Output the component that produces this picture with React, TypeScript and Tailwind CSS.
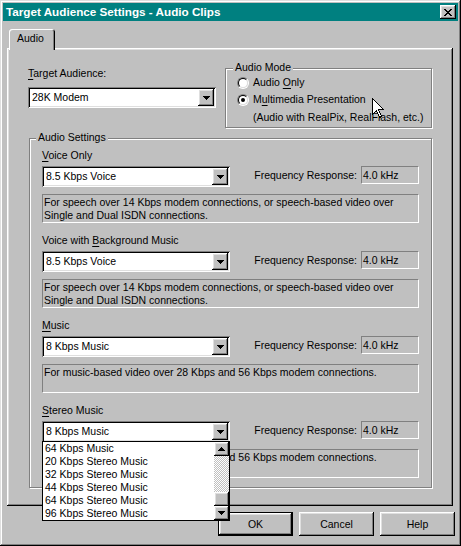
import React from 'react';

const raised =
  'shadow-[inset_-1px_-1px_#000,inset_1px_1px_#fff,inset_-2px_-2px_#808080,inset_2px_2px_#dfdfdf]';
const sunken =
  'shadow-[inset_1px_1px_#808080,inset_-1px_-1px_#fff,inset_2px_2px_#000,inset_-2px_-2px_#dfdfdf]';
const etched = 'border border-[#808080] shadow-[inset_1px_1px_#fff,1px_1px_#fff]';
const staticEdge = 'border border-[#808080] border-r-white border-b-white';

const speech = [
  'For speech over 14 Kbps modem connections, or speech-based video over',
  'Single and Dual ISDN connections.',
];
const music = ['For music-based video over 28 Kbps and 56 Kbps modem connections.'];

const listItems = [
  '64 Kbps Music',
  '20 Kbps Stereo Music',
  '32 Kbps Stereo Music',
  '44 Kbps Stereo Music',
  '64 Kbps Stereo Music',
  '96 Kbps Stereo Music',
];

function U({ children }: { children: React.ReactNode }) {
  return <span className="underline underline-offset-[2px] decoration-1">{children}</span>;
}

function Arrow({ up = false }: { up?: boolean }) {
  return (
    <svg width="7" height="4" viewBox="0 0 7 4" shapeRendering="crispEdges" className={up ? 'rotate-180' : ''}>
      <rect x="0" y="0" width="7" height="1" />
      <rect x="1" y="1" width="5" height="1" />
      <rect x="2" y="2" width="3" height="1" />
      <rect x="3" y="3" width="1" height="1" />
    </svg>
  );
}

function CloseGlyph() {
  const r: [number, number, number][] = [
    [0, 0, 2], [6, 0, 2], [1, 1, 2], [5, 1, 2], [2, 2, 4], [3, 3, 2],
    [2, 4, 4], [1, 5, 2], [5, 5, 2], [0, 6, 2], [6, 6, 2],
  ];
  return (
    <svg width="8" height="7" viewBox="0 0 8 7" shapeRendering="crispEdges">
      {r.map(([x, y, w], i) => (
        <rect key={i} x={x} y={y} width={w} height="1" />
      ))}
    </svg>
  );
}

function Select({ value, children }: { value: string; children?: React.ReactNode }) {
  return (
    <div className={`relative flex h-[21px] w-[188px] items-center bg-white p-[2px] ${sunken}`}>
      <span className="flex-1 pl-[2px] whitespace-nowrap">{value}</span>
      <div className={`flex h-[17px] w-[16px] items-center justify-center bg-[#c0c0c0] ${raised}`}>
        <Arrow />
      </div>
      {children}
    </div>
  );
}

function Radio({ checked = false }: { checked?: boolean }) {
  return (
    <div className="h-[12px] w-[12px] rounded-full border border-[#808080] border-r-white border-b-white">
      <div className="flex h-full w-full items-center justify-center rounded-full border border-black border-r-[#dfdfdf] border-b-[#dfdfdf] bg-white">
        {checked && <div className="h-[4px] w-[4px] rounded-full bg-black" />}
      </div>
    </div>
  );
}

function Button({ label, def = false }: { label: string; def?: boolean }) {
  return (
    <div
      className={`flex h-[24px] w-[75px] items-center justify-center bg-[#c0c0c0] ${raised} ${
        def ? 'border border-black' : ''
      }`}
    >
      {label}
    </div>
  );
}

// open list of the Stereo Music combo box
function DropList() {
  return (
    <div className="absolute left-0 top-[20px] z-20 flex h-[80px] w-[188px] border border-black bg-white">
      <div className="flex-1">
        {listItems.map((t) => (
          <div key={t} className="h-[13px] pl-[2px] whitespace-nowrap">
            {t}
          </div>
        ))}
      </div>
      <div className="flex w-[15px] flex-col">
        <div className={`flex h-[14px] items-center justify-center bg-[#c0c0c0] ${raised}`}>
          <Arrow up />
        </div>
        <div className="flex-1 bg-[repeating-conic-gradient(#c0c0c0_0%_25%,#fff_0%_50%)] bg-size-[2px_2px]" />
        <div className={`h-[14px] bg-[#c0c0c0] ${raised}`} />
        <div className={`flex h-[14px] items-center justify-center bg-[#c0c0c0] ${raised}`}>
          <Arrow />
        </div>
      </div>
    </div>
  );
}

const sections = [
  { label: <><U>V</U>oice Only</>, value: '8.5 Kbps Voice', desc: speech },
  { label: <>Voice with <U>B</U>ackground Music</>, value: '8.5 Kbps Voice', desc: speech },
  { label: <><U>M</U>usic</>, value: '8 Kbps Music', desc: music },
  { label: <><U>S</U>tereo Music</>, value: '8 Kbps Music', desc: music, open: true },
];

export default function App() {
  return (
    <div className="relative h-[546px] w-[461px] bg-[#c0c0c0] p-[3px] text-[10.5px] leading-[13px] text-black font-['Liberation_Sans',Arial,sans-serif] shadow-[inset_-1px_-1px_#000,inset_1px_1px_#dfdfdf,inset_-2px_-2px_#808080,inset_2px_2px_#fff]">
      {/* Title bar */}
      <div className="flex h-[18px] items-center justify-between bg-[#008080] pl-[3px] pr-[2px]">
        <span className="text-[11.7px] font-bold leading-[14px] text-white whitespace-nowrap">
          Target Audience Settings - Audio Clips
        </span>
        <div className={`flex h-[14px] w-[16px] items-center justify-center bg-[#c0c0c0] ${raised}`}>
          <CloseGlyph />
        </div>
      </div>

      {/* Tab */}
      <div className="relative z-10 mt-[8px] flex pl-[6px]">
        <div className="-mb-[2px] h-[21px] w-[46px] rounded-t-[3px] bg-[#c0c0c0] pl-[8px] pt-[3px] shadow-[inset_1px_1px_#fff,inset_-1px_0_#000,inset_-2px_0_#808080]">
          Audio
        </div>
      </div>

      {/* Tab panel */}
      <div className={`ml-[4px] h-[458px] w-[446px] pl-[21px] pt-[19px] ${raised}`}>
        <div className="flex items-start">
          <div className="w-[188px]">
            <div className="h-[13px]">
              <U>T</U>arget Audience:
            </div>
            <div className="mt-[7px]">
              <Select value="28K Modem" />
            </div>
          </div>

          <div className={`relative ml-[9px] mt-[1px] h-[60px] w-[207px] pl-[11px] pt-[5px] ${etched}`}>
            <span className="absolute -top-[8px] left-[7px] bg-[#c0c0c0] px-[2px]">Audio Mode</span>
            <div className="flex h-[17px] items-center gap-[4px]">
              <Radio />
              <span>
                Audio <U>O</U>nly
              </span>
            </div>
            <div className="flex h-[17px] items-center gap-[4px]">
              <Radio checked />
              <span>
                M<U>u</U>ltimedia Presentation
              </span>
            </div>
            <div className="mt-[3px] pl-[16px] whitespace-nowrap">(Audio with RealPix, RealFlash, etc.)</div>
          </div>
        </div>

        <div className={`relative ml-[1px] mt-[10px] h-[350px] w-[403px] pl-[12px] pt-[10px] ${etched}`}>
          <span className="absolute -top-[8px] left-[6px] bg-[#c0c0c0] px-[2px]">Audio Settings</span>
          {sections.map((s, i) => (
            <div key={i} className={i > 0 ? 'mt-[11px]' : ''}>
              <div className="h-[13px] whitespace-nowrap">{s.label}</div>
              <div className="mt-[4px] flex w-[377px] items-start justify-between">
                <Select value={s.value}>{s.open && <DropList />}</Select>
                <div className="flex h-[18px] items-center gap-[4px]">
                  <span>Frequency Response:</span>
                  <div className={`flex h-[18px] w-[58px] items-center pl-[1px] ${staticEdge}`}>4.0 kHz</div>
                </div>
              </div>
              <div className={`mt-[7px] h-[29px] w-[377px] px-[1px] pt-[1px] ${staticEdge}`}>
                {s.desc.map((l) => (
                  <div key={l} className="whitespace-nowrap">
                    {l}
                  </div>
                ))}
              </div>
            </div>
          ))}
        </div>
      </div>

      {/* Buttons */}
      <div className="mt-[6px] flex justify-end gap-[6px] pr-[3px]">
        <Button label="OK" def />
        <Button label="Cancel" />
        <Button label="Help" />
      </div>

      {/* Mouse pointer */}
      <svg
        className="absolute left-[372px] top-[98px] z-30"
        width="13"
        height="21"
        viewBox="0 0 13 21"
        shapeRendering="crispEdges"
      >
        <path d="M0.5 0.5 V16.5 L4.5 12.5 L7.5 19.5 L9.5 18.5 L6.5 11.5 H11.5 Z" fill="#fff" stroke="#000" strokeWidth="1" />
      </svg>
    </div>
  );
}
